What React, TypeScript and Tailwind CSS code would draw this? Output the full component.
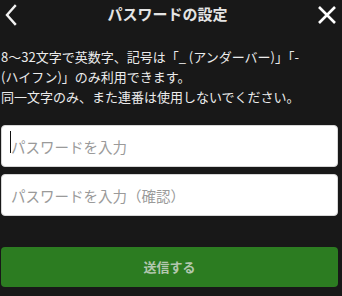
import { useState } from "react";

const jp = { fontFamily: '"Noto Sans CJK JP", "Noto Sans", sans-serif' };

function ChevronLeft() {
  return (
    <svg width="14" height="22" viewBox="0 0 14 22" fill="none">
      <path d="M11 2 L3 11 L11 20" stroke="#f2f2f2" strokeWidth="2.4" strokeLinecap="square" />
    </svg>
  );
}

function CloseIcon() {
  return (
    <svg width="20" height="20" viewBox="0 0 20 20" fill="none">
      <path d="M2 2 L18 18 M18 2 L2 18" stroke="#ffffff" strokeWidth="2.6" />
    </svg>
  );
}

export default function App() {
  const [pw, setPw] = useState("");
  const [confirm, setConfirm] = useState("");

  return (
    <div className="min-h-[296px] w-[342px] bg-[#181818]" style={jp}>
      <div className="w-[338px] pl-px">
        <header className="flex h-[40px] items-start justify-between">
          <button className="mt-[4px] ml-[3px] flex h-[22px] w-[14px] items-center" aria-label="戻る">
            <ChevronLeft />
          </button>
          <h1 className="mt-[3px] text-[15px] font-bold leading-[22px] text-[#e4e4e4]">パスワードの設定</h1>
          <button className="mt-[5px] mr-[1px] flex h-[20px] w-[20px] items-center" aria-label="閉じる">
            <CloseIcon />
          </button>
        </header>

        <p className="mt-[7px] text-[13px] leading-[20px] text-[#ececec]">
          8～32文字で英数字、記号は「_ (アンダーバー)」「-
          <br />
          (ハイフン)」のみ利用できます。
          <br />
          同一文字のみ、また連番は使用しないでください。
        </p>

        <div className="mt-[18px] flex flex-col gap-[7px]">
          <div className="relative">
            <input
              type="password"
              value={pw}
              onChange={(e) => setPw(e.target.value)}
              placeholder="パスワードを入力"
              className="h-[42px] w-full rounded-[4px] border border-[#d6d6d6] bg-white px-[9px] text-[14.5px] text-[#222] outline-none placeholder:text-[#9a9a9a]"
              style={jp}
            />
            <span className="absolute top-[6px] left-[9px] h-[22px] w-px bg-[#111]" />
          </div>
          <input
            type="password"
            value={confirm}
            onChange={(e) => setConfirm(e.target.value)}
            placeholder="パスワードを入力（確認）"
            className="h-[42px] w-full rounded-[4px] border border-[#d6d6d6] bg-white px-[9px] text-[14.5px] text-[#222] outline-none placeholder:text-[#9a9a9a]"
            style={jp}
          />
        </div>

        <button className="mt-[31px] flex h-[40px] w-full items-center justify-center rounded-[4px] bg-[#2c7c21] text-[13px] font-bold text-[#b3c7ae]">
          送信する
        </button>
      </div>
    </div>
  );
}
